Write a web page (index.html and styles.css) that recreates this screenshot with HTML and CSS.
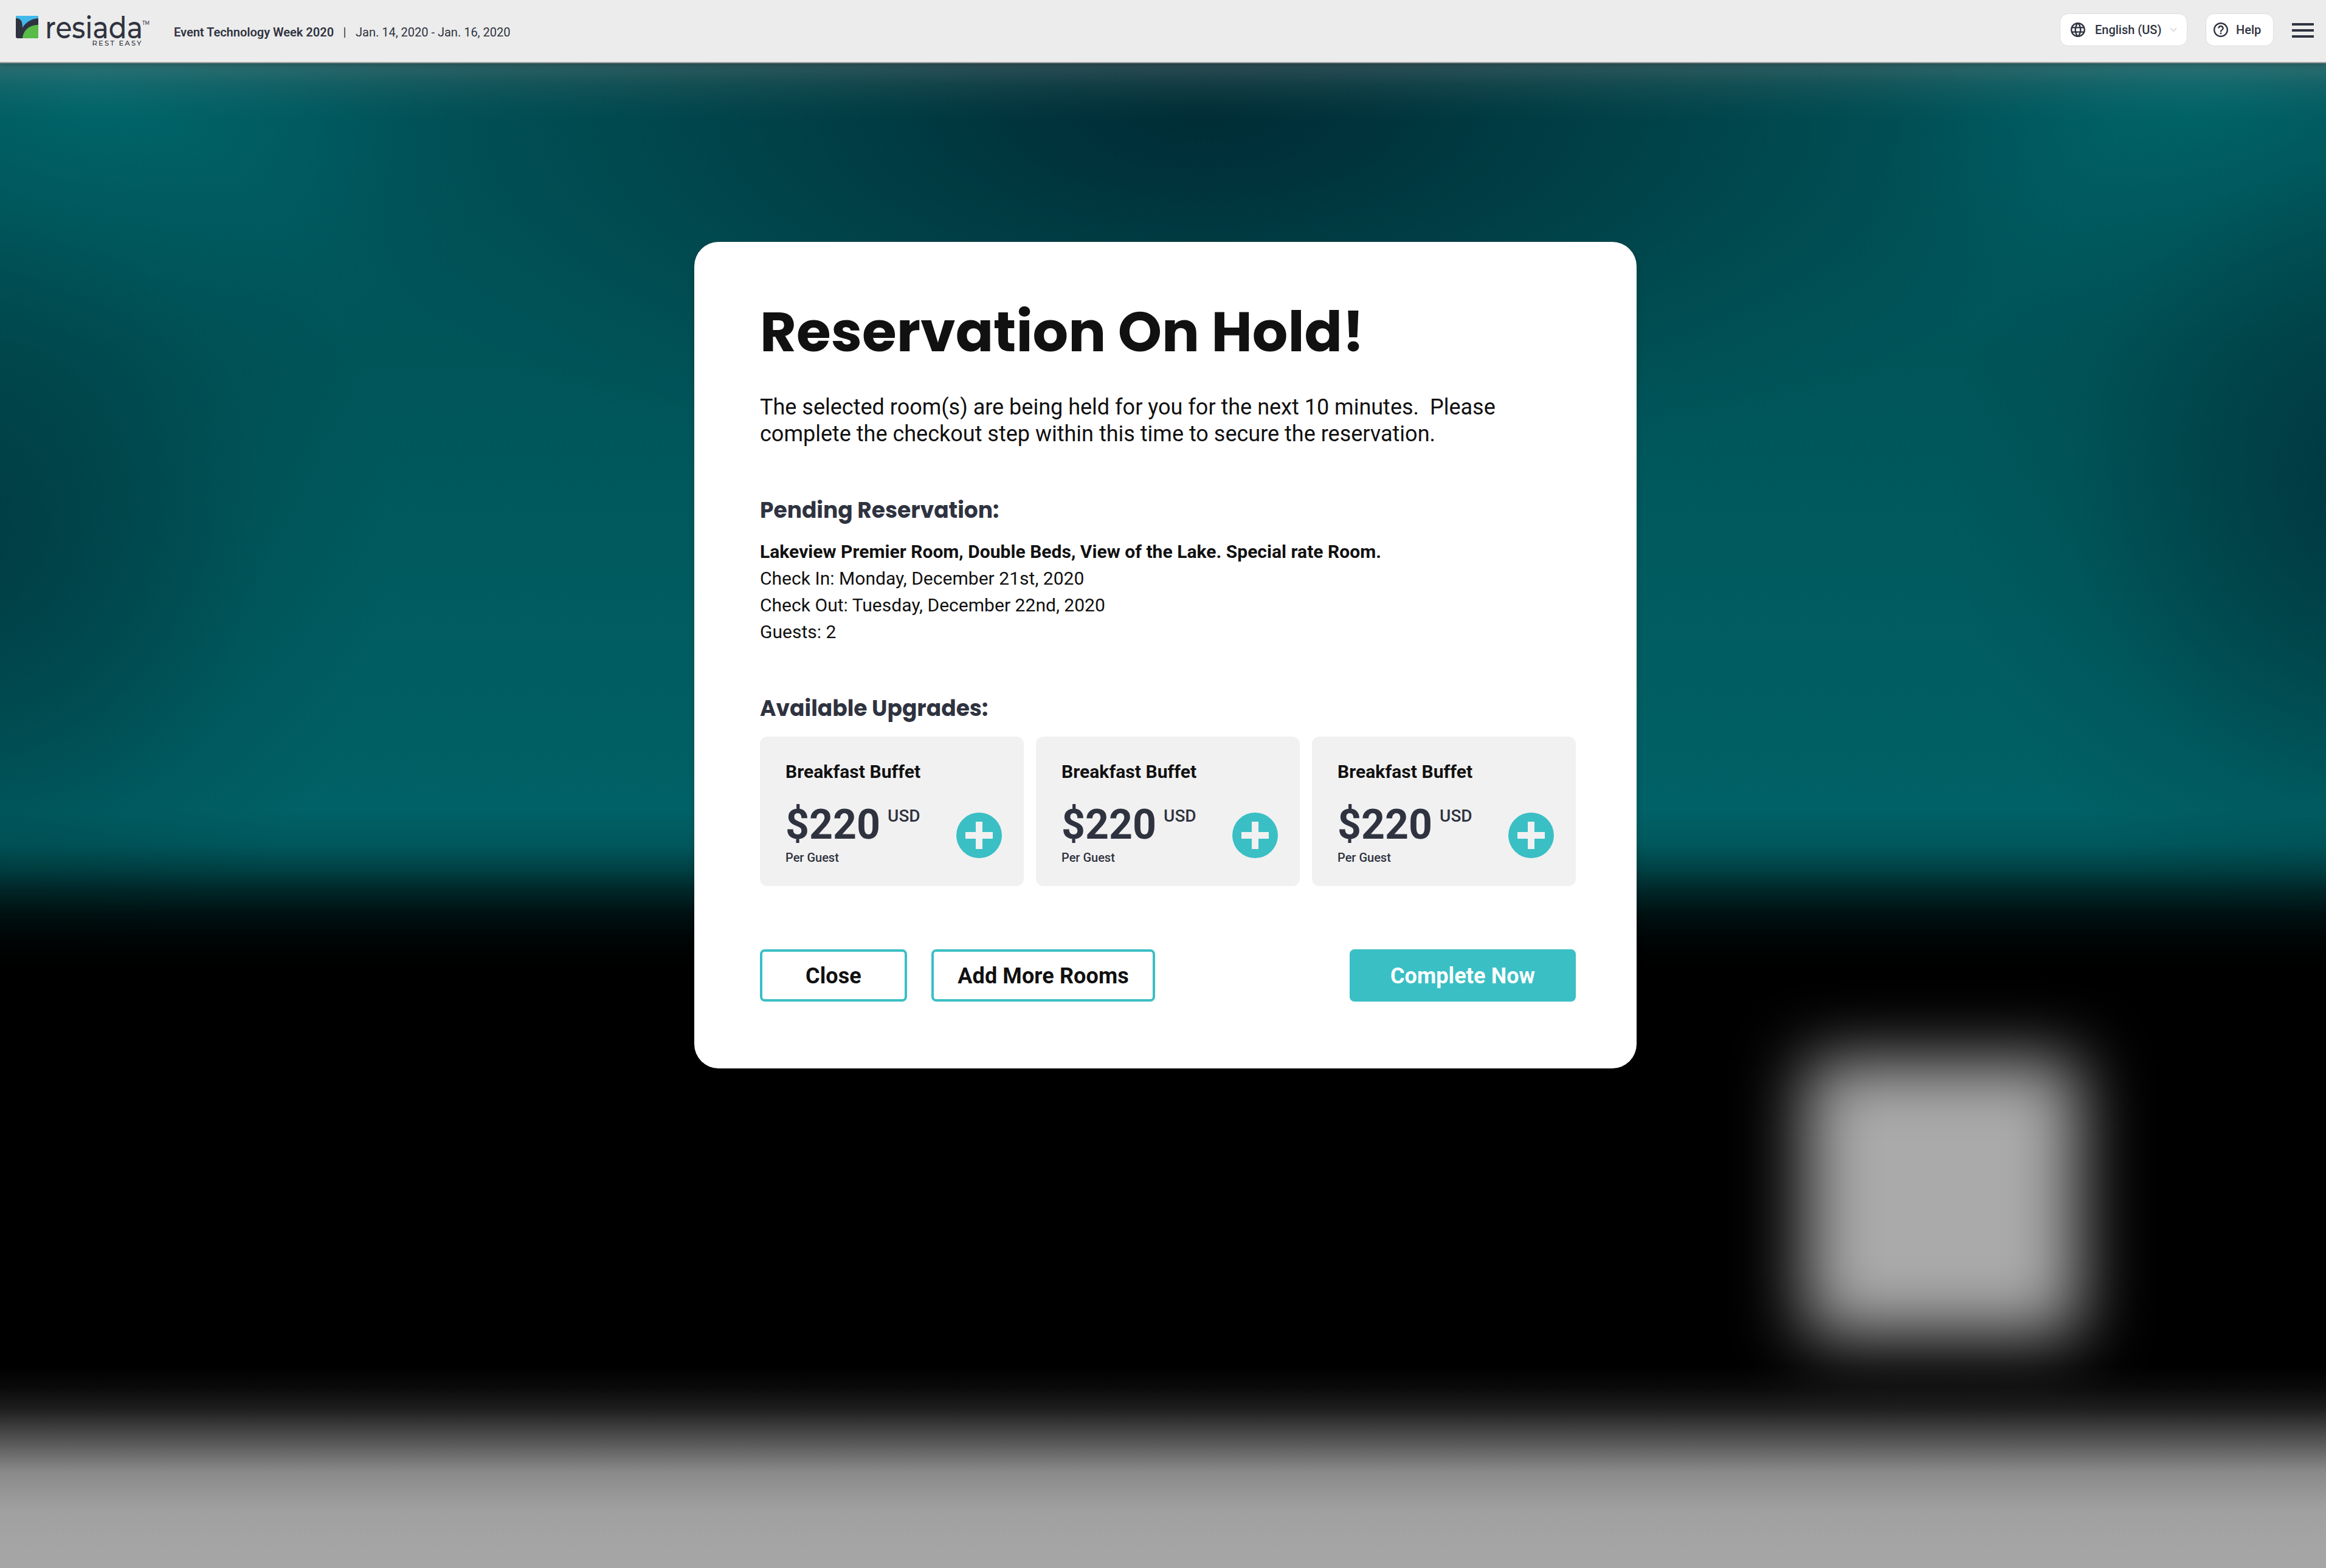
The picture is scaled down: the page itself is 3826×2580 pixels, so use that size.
FILE: index.html
```html
<!DOCTYPE html>
<html lang="en">
<head>
<meta charset="utf-8">
<title>Resiada – Reservation On Hold</title>
<link rel="stylesheet" href="styles.css">
</head>
<body>
<div class="backdrop" aria-hidden="true">
  <div class="backdrop-hero"></div>
  <div class="backdrop-box"></div>
  <div class="backdrop-footer"></div>
</div>

<header class="topbar">
  <svg class="logo" viewBox="0 0 224 56" width="224" height="56" role="img" aria-label="Resiada, rest easy">
    <clipPath id="mark"><rect width="37" height="37" rx="3"/></clipPath>
    <g clip-path="url(#mark)">
      <rect width="37" height="37" fill="#2f3340"/>
      <path d="M0 0H37V4C24 5 15 12 11 20C11 10 9 4 0 4Z" fill="#43b9ea"/>
      <path d="M11 37C12 25 21 15 37 15V37Z" fill="#59bb48"/>
    </g>
    <text class="logo-word" x="48" y="37" textLength="161" lengthAdjust="spacingAndGlyphs">resiada</text>
    <text class="logo-tm" x="208" y="15" textLength="12" lengthAdjust="spacingAndGlyphs">TM</text>
    <text class="logo-tag" x="125.500" y="49" textLength="81">REST EASY</text>
  </svg>
  <p class="event"><strong>Event Technology Week 2020</strong><span>|</span><span>Jan. 14, 2020 - Jan. 16, 2020</span></p>
  <nav class="tools">
    <button class="pill pill-lang">
      <svg class="pill-icon" viewBox="2 2 20 20"><path d="M11.99 2C6.47 2 2 6.48 2 12s4.47 10 9.99 10C17.52 22 22 17.52 22 12S17.52 2 11.99 2zm6.93 6h-2.95c-.32-1.25-.78-2.45-1.38-3.56 1.84.63 3.37 1.91 4.33 3.56zM12 4.04c.83 1.2 1.48 2.53 1.91 3.96h-3.82c.43-1.43 1.08-2.76 1.91-3.96zM4.26 14C4.1 13.36 4 12.69 4 12s.1-1.36.26-2h3.38c-.08.66-.14 1.32-.14 2s.06 1.34.14 2H4.26zm.82 2h2.95c.32 1.25.78 2.45 1.38 3.56-1.84-.63-3.37-1.9-4.33-3.56zm2.95-8H5.08c.96-1.66 2.49-2.93 4.33-3.56C8.81 5.55 8.35 6.75 8.03 8zM12 19.96c-.83-1.2-1.48-2.53-1.91-3.96h3.82c-.43 1.43-1.08 2.76-1.91 3.96zM14.34 14H9.66c-.09-.66-.16-1.32-.16-2s.07-1.35.16-2h4.68c.09.65.16 1.32.16 2s-.07 1.34-.16 2zm.25 5.56c.6-1.11 1.06-2.31 1.38-3.56h2.95c-.96 1.65-2.49 2.93-4.33 3.56zM16.36 14c.08-.66.14-1.32.14-2s-.06-1.34-.14-2h3.38c.16.64.26 1.31.26 2s-.1 1.36-.26 2h-3.38z"/></svg>
      <span>English (US)</span>
      <svg class="chevron" viewBox="0 0 12 8"><path d="M1 1.2L6 6.2L11 1.2"/></svg>
    </button>
    <button class="pill pill-help">
      <svg class="pill-icon" viewBox="2 2 20 20"><path d="M11 18h2v-2h-2v2zm1-16C6.48 2 2 6.48 2 12s4.48 10 10 10 10-4.480 10-10S17.520 2 12 2zm0 18c-4.410 0-8-3.590-8-8s3.590-8 8-8 8 3.590 8 8-3.590 8-8 8zm0-14c-2.210 0-4 1.790-4 4h2c0-1.100.9-2 2-2s2 .9 2 2c0 2-3 1.750-3 5h2c0-2.250 3-2.500 3-5 0-2.210-1.790-4-4-4z"/></svg>
      <span>Help</span>
    </button>
    <svg class="menu" viewBox="0 0 36 24"><path d="M0 0H36V4H0ZM0 10H36V14H0ZM0 20H36V24H0Z"/></svg>
  </nav>
</header>

<main class="modal">
  <h1 class="title">Reservation On Hold!</h1>
  <p class="lead">The selected room(s) are being held for you for the next 10 minutes.&nbsp; Please<br>complete the checkout step within this time to secure the reservation.</p>

  <h2 class="section-title section-pending">Pending Reservation:</h2>
  <ul class="details">
    <li class="room">Lakeview Premier Room, Double Beds, View of the Lake. Special rate Room.</li>
    <li>Check In: Monday, December 21st, 2020</li>
    <li>Check Out: Tuesday, December 22nd, 2020</li>
    <li>Guests: 2</li>
  </ul>

  <h2 class="section-title section-upgrades">Available Upgrades:</h2>
  <div class="upgrades">
    <article class="upgrade">
      <div class="offer">
        <h3 class="offer-name">Breakfast Buffet</h3>
        <p class="price"><span class="amount">$220</span><span class="currency">USD</span></p>
        <p class="unit">Per Guest</p>
      </div>
      <svg class="add" viewBox="0 0 75 75"><circle cx="37.5" cy="37.500" r="37.500"/><path d="M32 15H43V32H60V43H43V60H32V43H15V32H32Z"/></svg>
    </article>
    <article class="upgrade">
      <div class="offer">
        <h3 class="offer-name">Breakfast Buffet</h3>
        <p class="price"><span class="amount">$220</span><span class="currency">USD</span></p>
        <p class="unit">Per Guest</p>
      </div>
      <svg class="add" viewBox="0 0 75 75"><circle cx="37.5" cy="37.500" r="37.500"/><path d="M32 15H43V32H60V43H43V60H32V43H15V32H32Z"/></svg>
    </article>
    <article class="upgrade">
      <div class="offer">
        <h3 class="offer-name">Breakfast Buffet</h3>
        <p class="price"><span class="amount">$220</span><span class="currency">USD</span></p>
        <p class="unit">Per Guest</p>
      </div>
      <svg class="add" viewBox="0 0 75 75"><circle cx="37.5" cy="37.500" r="37.500"/><path d="M32 15H43V32H60V43H43V60H32V43H15V32H32Z"/></svg>
    </article>
  </div>

  <div class="actions">
    <button class="btn btn-close">Close</button>
    <button class="btn btn-more">Add More Rooms</button>
    <button class="btn btn-primary">Complete Now</button>
  </div>
</main>
</body>
</html>
```
FILE: styles.css
```css
:root {
  --ink: #2f3340;
  --text: #111;
  --teal: #3abfc5;
}

* { box-sizing: border-box; }

body {
  margin: 0;
  height: 2580px;
  overflow: hidden;
  position: relative;
  background: #000;
  color: var(--text);
  font-family: Roboto, "Liberation Sans", sans-serif;
}

h1, h2, h3, p, ul { margin: 0; padding: 0; }
ul { list-style: none; }
button { font: inherit; margin: 0; padding: 0; }
svg { display: block; }

/* Blurred page behind the dialog */
.backdrop {
  position: absolute;
  inset: 0;
  overflow: hidden;
  z-index: -1;
}

.backdrop-hero {
  height: 1610px;
  background:
    linear-gradient(to bottom, rgba(150, 140, 140, .3) 104px, rgba(120, 125, 125, .15) 140px, rgba(110, 120, 120, .04) 175px, transparent 200px),
    radial-gradient(ellipse 1500px 640px at 1980px 190px, rgba(0, 38, 48, .85) 0%, rgba(0, 40, 50, .72) 20%, rgba(0, 44, 52, .52) 42%, rgba(0, 50, 56, .3) 65%, rgba(0, 54, 60, .1) 85%, transparent 100%),
    radial-gradient(ellipse 700px 760px at -60px 880px, rgba(0, 52, 60, .8), rgba(0, 56, 62, .52) 40%, rgba(0, 64, 68, .2) 72%, transparent 100%),
    radial-gradient(ellipse 700px 760px at 3906px 800px, rgba(0, 48, 57, .85), rgba(0, 54, 60, .55) 40%, rgba(0, 64, 68, .2) 72%, transparent 100%),
    radial-gradient(ellipse 680px 520px at 150px 150px, rgba(0, 106, 110, .85), rgba(0, 102, 106, .48) 45%, rgba(0, 96, 100, .14) 80%, transparent 100%),
    radial-gradient(ellipse 680px 520px at 3646px 150px, rgba(0, 106, 110, .85), rgba(0, 102, 106, .48) 45%, rgba(0, 96, 100, .14) 80%, transparent 100%),
    linear-gradient(to bottom, #005359 100px, #005559 600px, #005c60 1000px, #006166 1330px);
  -webkit-mask-image: linear-gradient(to bottom, #000 1335px, rgba(0, 0, 0, .9) 1390px, rgba(0, 0, 0, .67) 1430px, rgba(0, 0, 0, .4) 1465px, rgba(0, 0, 0, .17) 1505px, rgba(0, 0, 0, .05) 1545px, transparent 1595px);
  mask-image: linear-gradient(to bottom, #000 1335px, rgba(0, 0, 0, .9) 1390px, rgba(0, 0, 0, .67) 1430px, rgba(0, 0, 0, .4) 1465px, rgba(0, 0, 0, .17) 1505px, rgba(0, 0, 0, .05) 1545px, transparent 1595px);
}

.backdrop-box {
  position: absolute;
  left: 2970px;
  top: 1745px;
  width: 450px;
  height: 452px;
  background: #aaa;
  filter: blur(56px);
}

.backdrop-footer {
  position: absolute;
  left: 0;
  right: 0;
  bottom: 0;
  height: 332px;
  background: linear-gradient(to bottom, rgba(165, 165, 165, 0), rgba(165, 165, 165, .06) 35px, rgba(165, 165, 165, .18) 70px, rgba(165, 165, 165, .5) 121px, rgba(165, 165, 165, .83) 173px, rgba(165, 165, 165, .97) 235px, #a5a5a5 300px);
}

/* Top bar */
.topbar {
  display: flex;
  height: 104px;
  padding-left: 26px;
  padding-right: 20px;
  background: #ececec;
  border-bottom: 2px solid #9d9f9e;
  box-shadow: 0 2px 10px rgba(0, 0, 0, .25);
  color: var(--ink);
}

.logo { margin-top: 26px; overflow: visible; }
.logo-word { font: 500 51px Montserrat, Lato, sans-serif; fill: var(--ink); }
.logo-tm { font: 500 9px Montserrat, Lato, sans-serif; fill: var(--ink); }
.logo-tag { font: 500 11.500px Montserrat, Lato, sans-serif; fill: var(--ink); }

.event {
  display: flex;
  gap: 15.500px;
  margin-top: 41px;
  margin-left: 36px;
  font-size: 20px;
  line-height: 24px;
  white-space: nowrap;
}
.event strong { font-weight: 600; }

.tools {
  display: flex;
  align-items: flex-start;
  margin-left: auto;
}

.pill {
  display: flex;
  align-items: center;
  height: 54px;
  margin-top: 22px;
  background: #fff;
  border: 1px solid #ddd;
  border-radius: 14px;
  color: var(--ink);
  font-size: 20px;
  font-weight: 500;
  line-height: 24px;
}
.pill-lang { width: 210px; padding-left: 17px; margin-right: 30px; }
.pill-help { width: 112px; padding-left: 12px; margin-right: 30px; }
.pill-icon { width: 24px; height: 24px; fill: var(--ink); }
.pill-lang span { margin-left: 16px; }
.pill-help span { margin-left: 13px; }
.chevron {
  width: 12px;
  height: 8px;
  margin-left: 14px;
  fill: none;
  stroke: #dedede;
  stroke-width: 2.200;
}
.menu { width: 36px; height: 24px; margin-top: 38px; fill: var(--ink); }

/* Dialog */
.modal {
  width: 1550px;
  height: 1360px;
  margin: 294px 0 0 1142px;
  padding: 83px 100px 110px 108px;
  background: #fff;
  border-radius: 40px;
  box-shadow: 0 6px 12px rgba(0, 0, 0, .16);
}

.title {
  font: 700 92px/130px Poppins, Inter, sans-serif;
  white-space: nowrap;
}

.lead {
  margin-top: 37px;
  font-size: 36px;
  line-height: 44px;
}

.section-title {
  color: var(--ink);
  font: 700 36px/48px Poppins, Inter, sans-serif;
}
.section-pending { margin-top: 80px; }
.section-upgrades { margin-top: 80px; }

.details {
  margin-top: 22px;
  font-size: 30px;
  line-height: 44px;
  letter-spacing: .03px;
}
.room { font-weight: 700; }

.upgrades {
  display: grid;
  grid-template-columns: repeat(3, 1fr);
  gap: 20px;
  margin-top: 22px;
}

.upgrade {
  display: flex;
  justify-content: space-between;
  height: 246px;
  padding: 40px 36px 0 42px;
  background: #f1f1f1;
  border-radius: 12px;
}

.offer-name { font-size: 30px; font-weight: 700; line-height: 36px; letter-spacing: .05px; }
.price { display: flex; align-items: flex-start; margin-top: 29px; color: var(--ink); line-height: 80px; }
.amount { font-size: 68px; font-weight: 700; }
.currency { margin-left: 12px; font-size: 28px; font-weight: 500; line-height: 52px; }
.unit { margin-top: 2px; color: var(--ink); font-size: 20px; font-weight: 500; line-height: 24px; }
.add { width: 75px; height: 75px; margin-top: 84.500px; }
.add circle { fill: var(--teal); }
.add path { fill: #f1f1f1; }

.actions { display: flex; margin-top: 104px; }
.btn {
  height: 86px;
  padding-top: 1px;
  border: 4px solid var(--teal);
  border-radius: 8px;
  background: #fff;
  color: var(--text);
  font-size: 36px;
  font-weight: 700;
  line-height: 42px;
  letter-spacing: .1px;
}
.btn-close { width: 242px; }
.btn-more { width: 368px; margin-left: 40px; }
.btn-primary { width: 372px; margin-left: auto; background: var(--teal); color: #fff; }
```
